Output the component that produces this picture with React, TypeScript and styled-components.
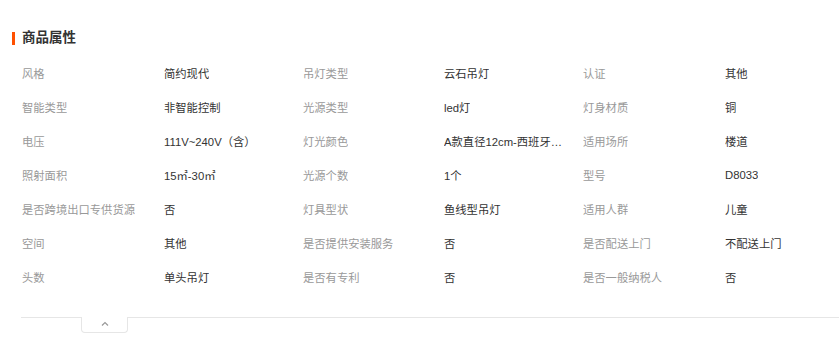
import React from 'react';
import styled, { createGlobalStyle } from 'styled-components';

const GlobalStyle = createGlobalStyle`
  body {
    margin: 0;
    background: #fff;
    font-family: "Liberation Sans", "Noto Sans CJK SC", sans-serif;
  }
`;

const Panel = styled.div`
  width: 839px;
  padding-top: 28px;
`;

const Title = styled.h3`
  position: relative;
  margin: 0 0 8px 22px;
  font-size: 13.5px;
  line-height: 20px;
  font-weight: bold;
  color: #333;

  &::before {
    content: '';
    position: absolute;
    left: -10px;
    top: 4px;
    width: 3px;
    height: 13px;
    background: #ff5000;
  }
`;

const Grid = styled.div`
  display: grid;
  grid-template-columns: 142px 139px 141px 139px 142px 114px;
  grid-auto-rows: 34px;
  padding-left: 22px;
`;

const Cell = styled.div<{ $label?: boolean }>`
  display: flex;
  align-items: center;
  font-size: 11.3px;
  color: ${p => (p.$label ? '#999' : '#333')};
  min-width: 0;
  padding-right: 16px;

  span {
    white-space: nowrap;
    overflow: hidden;
    text-overflow: ellipsis;
  }
`;

const Footer = styled.div`
  display: flex;
  margin: 23px 0 0 21px;
`;

const Line = styled.div<{ $width?: number }>`
  border-top: 1px solid #e6e6e6;
  ${p => (p.$width ? `width: ${p.$width}px;` : 'flex: 1;')}
`;

const Toggle = styled.div`
  width: 47px;
  height: 16px;
  border: 1px solid #e6e6e6;
  border-top: none;
  border-radius: 0 0 4px 4px;
  display: flex;
  justify-content: center;
  padding-top: 4px;
  box-sizing: border-box;
`;

const attrs: [string, string][] = [
  ['风格', '简约现代'],
  ['吊灯类型', '云石吊灯'],
  ['认证', '其他'],
  ['智能类型', '非智能控制'],
  ['光源类型', 'led灯'],
  ['灯身材质', '铜'],
  ['电压', '111V~240V（含）'],
  ['灯光颜色', 'A款直径12cm-西班牙云石灯罩'],
  ['适用场所', '楼道'],
  ['照射面积', '15㎡-30㎡'],
  ['光源个数', '1个'],
  ['型号', 'D8033'],
  ['是否跨境出口专供货源', '否'],
  ['灯具型状', '鱼线型吊灯'],
  ['适用人群', '儿童'],
  ['空间', '其他'],
  ['是否提供安装服务', '否'],
  ['是否配送上门', '不配送上门'],
  ['头数', '单头吊灯'],
  ['是否有专利', '否'],
  ['是否一般纳税人', '否'],
];

const App: React.FC = () => {
  return (
    <Panel>
      <GlobalStyle />
      <Title>商品属性</Title>
      <Grid>
        {attrs.map(([k, v]) => (
          <React.Fragment key={k}>
            <Cell $label><span>{k}</span></Cell>
            <Cell><span>{v}</span></Cell>
          </React.Fragment>
        ))}
      </Grid>
      <Footer>
        <Line $width={60} />
        <Toggle>
          <svg width="8" height="5" viewBox="0 0 8 5">
            <path d="M1 4.5 L4 1.5 L7 4.5" fill="none" stroke="#999" strokeWidth="1.2" />
          </svg>
        </Toggle>
        <Line />
      </Footer>
    </Panel>
  );
};

export default App;
